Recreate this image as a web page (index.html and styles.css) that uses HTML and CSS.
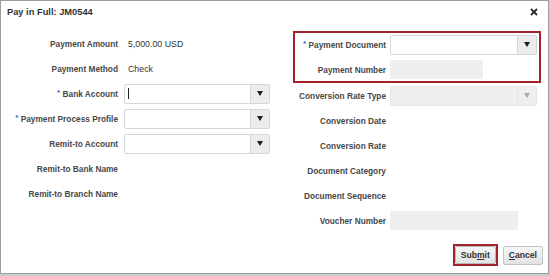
FILE: index.html
```html
<!DOCTYPE html>
<html lang="en">
<head>
    <meta charset="UTF-8">
    <meta name="viewport" content="width=device-width, initial-scale=1.0">
    <title>Pay in Full</title>
    <link rel="stylesheet" href="styles.css">
</head>
<body>
    <!-- Pay in Full dialog -->
    <div class="dialog">
        <div class="dialog-header">
            <h1 class="dialog-title">Pay in Full: JM0544</h1>
            <button class="close-btn" title="Close">
                <svg width="8" height="8" viewBox="0 0 8 8"><path d="M1 1L7 7M7 1L1 7" stroke="#2b2b2b" stroke-width="1.8"/></svg>
            </button>
        </div>

        <div class="dialog-body">
            <div class="panel panel-left">
                <div class="row">
                    <span class="label">Payment Amount</span>
                    <span class="value">5,000.00 USD</span>
                </div>
                <div class="row">
                    <span class="label">Payment Method</span>
                    <span class="value">Check</span>
                </div>
                <div class="row">
                    <span class="label"><span class="req">*</span> Bank Account</span>
                    <div class="select">
                        <div class="select-input"><span class="caret"></span></div>
                        <div class="select-btn"><span class="arrow"></span></div>
                    </div>
                </div>
                <div class="row">
                    <span class="label"><span class="req">*</span> Payment Process Profile</span>
                    <div class="select">
                        <div class="select-input"></div>
                        <div class="select-btn"><span class="arrow"></span></div>
                    </div>
                </div>
                <div class="row">
                    <span class="label">Remit-to Account</span>
                    <div class="select">
                        <div class="select-input"></div>
                        <div class="select-btn"><span class="arrow"></span></div>
                    </div>
                </div>
                <div class="row">
                    <span class="label">Remit-to Bank Name</span>
                    <span class="value"></span>
                </div>
                <div class="row">
                    <span class="label">Remit-to Branch Name</span>
                    <span class="value"></span>
                </div>
            </div>

            <div class="panel panel-right">
                <div class="highlight">
                    <div class="row">
                        <span class="label"><span class="req">*</span> Payment Document</span>
                        <div class="select">
                            <div class="select-input"></div>
                            <div class="select-btn"><span class="arrow"></span></div>
                        </div>
                    </div>
                    <div class="row">
                        <span class="label">Payment Number</span>
                        <div class="readonly-field field-number"></div>
                    </div>
                </div>
                <div class="row">
                    <span class="label">Conversion Rate Type</span>
                    <div class="select disabled">
                        <div class="select-input"></div>
                        <div class="select-btn"><span class="arrow"></span></div>
                    </div>
                </div>
                <div class="row">
                    <span class="label">Conversion Date</span>
                    <span class="value"></span>
                </div>
                <div class="row">
                    <span class="label">Conversion Rate</span>
                    <span class="value"></span>
                </div>
                <div class="row">
                    <span class="label">Document Category</span>
                    <span class="value"></span>
                </div>
                <div class="row">
                    <span class="label">Document Sequence</span>
                    <span class="value"></span>
                </div>
                <div class="row">
                    <span class="label">Voucher Number</span>
                    <div class="readonly-field field-voucher"></div>
                </div>
            </div>
        </div>

        <div class="dialog-footer">
            <span class="focus-ring">
                <button class="btn">Sub<u>m</u>it</button>
            </span>
            <button class="btn"><u>C</u>ancel</button>
        </div>
    </div>
</body>
</html>
```

FILE: styles.css
```css
* {
    margin: 0;
    padding: 0;
    box-sizing: border-box;
}

body {
    font-family: "Liberation Sans", Arial, sans-serif;
    background: #c9cbce;
    width: 550px;
    height: 276px;
    overflow: hidden;
}

/* Dialog frame */
.dialog {
    width: 549px;
    height: 274px;
    background: #fff;
    border: 1px solid #9a9ea3;
    display: flex;
    flex-direction: column;
}

.dialog-header {
    height: 30px;
    display: flex;
    justify-content: space-between;
    align-items: flex-start;
    padding: 5px 10px 0 6px;
}

.dialog-title {
    font-size: 9.3px;
    font-weight: bold;
    color: #333;
    line-height: 12px;
}

.close-btn {
    border: none;
    background: transparent;
    width: 8px;
    height: 8px;
    margin-top: 2px;
    display: flex;
}

/* Form panels */
.dialog-body {
    display: flex;
    gap: 23px;
}

.panel-left {
    width: 269px;
}

.panel-right {
    width: 248px;
}

.row {
    display: grid;
    height: 25px;
    align-items: center;
}

.panel-left .row {
    grid-template-columns: 117px 146px;
    column-gap: 6px;
}

.panel-right .row {
    grid-template-columns: 93px 147px;
    column-gap: 4px;
}

.highlight {
    padding: 1px 0;
    outline: 2px solid #a3212b;
    outline-offset: -2px;
}

.label {
    font-size: 8.3px;
    font-weight: bold;
    color: #474747;
    text-align: right;
    white-space: nowrap;
}

.req {
    color: #2767b0;
    font-size: 8px;
    vertical-align: 2px;
}

.value {
    font-size: 8.8px;
    color: #333;
    padding-left: 4px;
}

/* Choice list */
.select {
    display: flex;
    height: 20px;
    border: 1px solid #d3d8dd;
    border-radius: 2px;
    background: #fff;
}

.select-input {
    flex: 1;
    display: flex;
    align-items: center;
    padding-left: 3px;
}

.caret {
    width: 1px;
    height: 11px;
    background: #222;
}

.select-btn {
    width: 19px;
    background: #ececec;
    border-left: 1px solid #d3d8dd;
    display: flex;
    justify-content: center;
    align-items: center;
}

.arrow {
    width: 0;
    height: 0;
    border-left: 3.5px solid transparent;
    border-right: 3.5px solid transparent;
    border-top: 5px solid #1e1e1e;
}

.select.disabled {
    background: #efefef;
    border-color: #e6e6e6;
}

.select.disabled .select-btn {
    background: #efefef;
    border-left-color: #e6e6e6;
}

.select.disabled .arrow {
    border-top-color: #a9a9a9;
}

.readonly-field {
    height: 19px;
    background: #efefef;
}

.field-number {
    width: 93px;
}

.field-voucher {
    width: 128px;
}

/* Buttons */
.dialog-footer {
    display: flex;
    justify-content: flex-end;
    align-items: center;
    gap: 5px;
    padding-right: 5px;
    margin-top: 11px;
}

.focus-ring {
    display: flex;
    border: 2px solid #a3212b;
}

.btn {
    font-family: "Liberation Sans", Arial, sans-serif;
    font-size: 8.6px;
    font-weight: bold;
    color: #333;
    height: 19px;
    padding: 0 5px;
    background: linear-gradient(#f7f7f7, #e3e3e3);
    border: 1px solid #c2c4c6;
    border-radius: 2px;
}

.focus-ring .btn {
    height: 18px;
    border-color: #b8b8b8;
}
```
